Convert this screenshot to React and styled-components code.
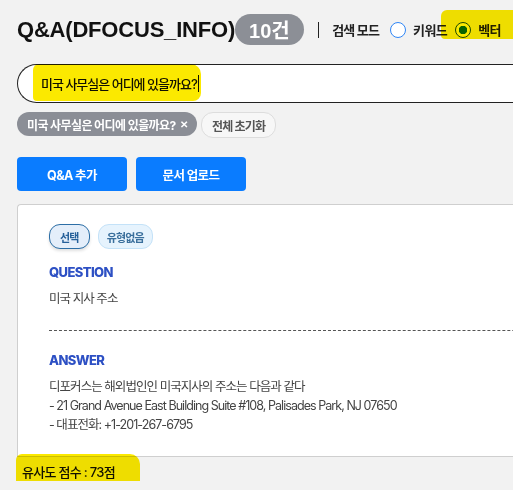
import styled, { createGlobalStyle } from 'styled-components';

const GlobalStyle = createGlobalStyle`
  html, body {
    margin: 0;
    padding: 0;
    background: #f2f2f2;
    overflow: hidden;
  }
  body {
    font-family: Inter, "Noto Sans CJK KR", sans-serif;
    color: #222;
  }
`;

export default function App() {
  const chips = ['미국 사무실은 어디에 있을까요?'];
  const answer = [
    '디포커스는 해외법인인 미국지사의 주소는 다음과 같다',
    '- 21 Grand Avenue East Building Suite #108, Palisades Park, NJ 07650',
    '- 대표전화: +1-201-267-6795',
  ];

  return (
    <Page>
      <GlobalStyle />
      <Header>
        <Title>Q&amp;A(DFOCUS_INFO)</Title>
        <Count>10건</Count>
        <Divider />
        <ModeLabel>검색 모드</ModeLabel>
        <Option>
          <Radio />
          키워드
        </Option>
        <Option>
          <Radio checked />
          벡터
          <Marker style={{ left: -14, right: -70, top: -10, bottom: 0 }} />
        </Option>
      </Header>

      <SearchBox>
        <SearchText>
          미국 사무실은 어디에 있을까요?<Caret />
          <Marker style={{ left: -8, right: -2, top: -10, bottom: -8 }} />
        </SearchText>
      </SearchBox>

      <ChipRow>
        {chips.map((c) => (
          <Chip key={c}>
            {c} <span>✕</span>
          </Chip>
        ))}
        <ResetChip>전체 초기화</ResetChip>
      </ChipRow>

      <ButtonRow>
        <Button>Q&amp;A 추가</Button>
        <Button>문서 업로드</Button>
      </ButtonRow>

      <Card>
        <TagRow>
          <Tag active>선택</Tag>
          <Tag>유형없음</Tag>
        </TagRow>
        <Label>QUESTION</Label>
        <Body>미국 지사 주소</Body>
        <Dashed />
        <Label answer>ANSWER</Label>
        <Body>
          {answer.map((line) => (
            <div key={line}>{line}</div>
          ))}
        </Body>
      </Card>

      <Score>
        유사도 점수 : 73점
        <Marker style={{ left: -6, right: -25, top: -8, bottom: -9 }} />
      </Score>
    </Page>
  );
}

const Page = styled.div`
  width: 600px;
  padding: 14px 0 0 17px;
  box-sizing: border-box;
`;

const Marker = styled.span`
  position: absolute;
  background: #fbe900;
  mix-blend-mode: multiply;
  border-radius: 6px 10px 8px 4px;
  pointer-events: none;
`;

const Header = styled.div`
  display: flex;
  align-items: center;
  height: 31px;
`;

const Title = styled.h1`
  margin: 0;
  font-family: "Liberation Sans", Arial, sans-serif;
  font-size: 22px;
  font-weight: 700;
  color: #111;
  letter-spacing: -0.2px;
`;

const Count = styled.span`
  display: inline-flex;
  align-items: center;
  height: 31px;
  padding: 0 14px;
  border-radius: 16px;
  background: #8c8f96;
  color: #fff;
  font-family: "Liberation Sans", "Noto Sans CJK KR", sans-serif;
  font-size: 20px;
  font-weight: 700;
`;

const Divider = styled.span`
  width: 1.5px;
  height: 16px;
  background: #222;
  margin: 0 13px 0 14px;
`;

const ModeLabel = styled.span`
  font-size: 13px;
  font-weight: 700;
  color: #222;
  margin-right: 11px;
  letter-spacing: -0.8px;
`;

const Option = styled.label`
  position: relative;
  display: inline-flex;
  align-items: center;
  gap: 7px;
  margin-right: 8px;
  font-size: 13px;
  font-weight: 700;
  color: #222;
  letter-spacing: -0.6px;
`;

const Radio = styled.span`
  width: 16px;
  height: 16px;
  box-sizing: border-box;
  border-radius: 50%;
  border: 1.5px solid ${(p) => (p.checked ? '#1d4f8c' : '#2f86f6')};
  background: ${(p) => (p.checked ? 'radial-gradient(circle, #0a6de0 0 4px, #fff 4.5px)' : '#fff')};
`;

const SearchBox = styled.div`
  margin-top: 19px;
  height: 39px;
  box-sizing: border-box;
  border: 1.2px solid #222;
  border-radius: 20px 0 0 20px;
  border-right: none;
  background: #fff;
  display: flex;
  align-items: center;
  padding-left: 23px;
`;

const SearchText = styled.span`
  position: relative;
  font-size: 13px;
  font-weight: 500;
  color: #111;
  letter-spacing: -1px;
  display: inline-flex;
  align-items: center;
`;

const Caret = styled.span`
  width: 1px;
  height: 17px;
  margin-left: 1px;
  background: #111;
`;

const ChipRow = styled.div`
  display: flex;
  gap: 4px;
  margin-top: 9px;
`;

const Chip = styled.span`
  display: inline-flex;
  align-items: center;
  gap: 4px;
  height: 24px;
  padding: 0 10px;
  border-radius: 12px;
  background: #8b8e96;
  color: #fff;
  font-size: 12px;
  font-weight: 700;
  letter-spacing: -0.6px;
  span {
    font-size: 10px;
  }
`;

const ResetChip = styled.span`
  display: inline-flex;
  align-items: center;
  height: 24px;
  padding: 0 10px;
  border-radius: 12px;
  border: 1px solid #ddd;
  background: #f7f7f7;
  color: #555;
  font-size: 12px;
  font-weight: 700;
  letter-spacing: -0.8px;
`;

const ButtonRow = styled.div`
  display: flex;
  gap: 9px;
  margin-top: 19px;
`;

const Button = styled.button`
  width: 110px;
  height: 34px;
  border: none;
  border-radius: 4px;
  background: #0a7cff;
  color: #fff;
  font-family: Inter, "Noto Sans CJK KR", sans-serif;
  font-size: 12.5px;
  font-weight: 700;
  letter-spacing: -0.6px;
`;

const Card = styled.div`
  margin-top: 13px;
  height: 253px;
  box-sizing: border-box;
  background: #fff;
  border: 1px solid #cfcfcf;
  border-right: none;
  border-radius: 4px 0 0 0;
  padding: 19px 0 0 31px;
`;

const TagRow = styled.div`
  display: flex;
  gap: 8px;
`;

const Tag = styled.span`
  display: inline-flex;
  align-items: center;
  height: 25px;
  padding: 0 ${(p) => (p.active ? 10 : 8)}px;
  box-sizing: border-box;
  border-radius: 11px;
  font-size: 11px;
  font-weight: 700;
  letter-spacing: -0.8px;
  color: ${(p) => (p.active ? '#26609a' : '#3a6f9c')};
  background: ${(p) => (p.active ? '#e4eefa' : '#e6f3fd')};
  border: 1px solid ${(p) => (p.active ? '#2c6ea6' : '#c4e2f8')};
  box-shadow: ${(p) => (p.active ? '0 2px 3px rgba(0,0,0,0.12)' : 'none')};
`;

const Label = styled.div`
  margin-top: ${(p) => (p.answer ? 21 : 15)}px;
  font-size: 13px;
  font-weight: 800;
  color: #2d50c4;
  letter-spacing: -0.6px;
`;

const Body = styled.div`
  margin-top: 9px;
  font-size: 12.5px;
  line-height: 19px;
  color: #444;
  letter-spacing: -0.95px;
`;

const Dashed = styled.div`
  margin-top: 22px;
  border-top: 1px dashed #555;
`;

const Score = styled.div`
  position: relative;
  display: inline-block;
  margin: 5px 0 0 5px;
  font-size: 13px;
  font-weight: 500;
  color: #111;
  letter-spacing: -0.7px;
`;
